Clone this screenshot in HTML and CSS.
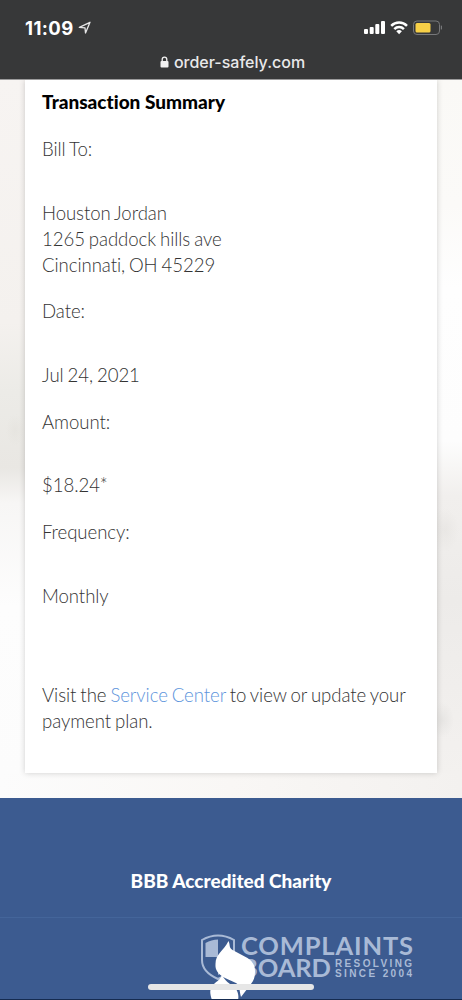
FILE: index.html
```
<!DOCTYPE html>
<html lang="en">
<head>
<meta charset="utf-8">
<title>Transaction Summary</title>
<link rel="stylesheet" href="styles.css">
</head>
<body>
<header class="browser-bar">
  <div class="status">
    <div class="clock"><span>11:09</span>
      <svg width="14" height="14" viewBox="0 0 14 14"><path d="M1.3 6.4 12 1.3 7.5 12 7 6.8Z" fill="none" stroke="#e6e6e7" stroke-width="1.3" stroke-linejoin="round"/></svg>
    </div>
    <svg class="indicators" width="80" height="16" viewBox="0 0 80 16">
      <g fill="#fff"><rect x="2" y="9" width="4" height="5" rx="1"/><rect x="7.700" y="7" width="4" height="7" rx="1"/><rect x="13.300" y="4" width="4" height="10" rx="1"/><rect x="19" y="1" width="4" height="13" rx="1"/></g>
      <g fill="none" stroke="#fff" stroke-width="2.500"><path d="M29.200 5.800a11.200 11.200 0 0 1 15.800 0"/><path d="M32.300 9.100a6.800 6.800 0 0 1 9.600 0"/></g>
      <path d="M34.300 11.300a4 4 0 0 1 5.600 0L37.100 14.200Z" fill="#fff"/>
      <rect x="51.500" y="1" width="26" height="13.500" rx="3.500" fill="none" stroke="#77787a"/>
      <rect x="53.500" y="3" width="15" height="9.500" rx="1.500" fill="#f7d047"/>
      <path d="M78.800 5.500v4a2 2 0 0 0 0-4" fill="#77787a"/>
    </svg>
  </div>
  <div class="address">
    <svg width="9" height="12" viewBox="0 0 9 12"><rect x=".5" y="5" width="8" height="6.500" rx="1" fill="#f2f2f2"/><path d="M2.200 5.500V3.500a2.300 2.300 0 0 1 4.600 0v2" fill="none" stroke="#f2f2f2" stroke-width="1.300"/></svg>
    <span>order-safely.com</span>
  </div>
</header>
<main class="page">
  <section class="card">
    <h1>Transaction Summary</h1>
    <dl>
      <dt>Bill To:</dt><dd>Houston Jordan<br>1265 paddock hills ave<br>Cincinnati, OH 45229</dd>
      <dt>Date:</dt><dd>Jul 24, 2021</dd>
      <dt>Amount:</dt><dd>$18.24*</dd>
      <dt>Frequency:</dt><dd>Monthly</dd>
    </dl>
    <p>Visit the <a>Service Center</a> to view or update your payment plan.</p>
  </section>
</main>
<footer class="footer">
  <h2>BBB Accredited Charity</h2>
  <div class="badge">
    <svg width="462" height="82" viewBox="0 0 462 82">
      <g fill="#a9bad6">
        <path d="M202 22q16-9 32 0v20q0 12-16 19-16-7-16-19Z" fill="none" stroke="#a9bad6" stroke-width="2"/>
        <path d="M205.500 25q6-3.500 12.500-3.500V39H205.500ZM218 39h12.500v3q0 10-12.500 15Z"/>
        <text class="mark" x="241" y="36.500" textLength="172">COMPLAINTS</text>
        <text class="mark" x="241" y="58.500" textLength="90">BOARD</text>
        <text class="tag" x="335" y="48.500" textLength="77">RESOLVING</text>
        <text class="tag" x="335" y="59" textLength="77">SINCE 2004</text>
      </g>
      <path d="M228.500 23c2 4 0 6 4 9l15 8c6 4 7.500 8 7.500 13 0 6-1 9-4 13-4 5-6 8-10 13-2-7-1-12-5-14l-11-5c-7-4-10-8-9.500-14 0-10 8-13 13-23Z" fill="#fff"/>
      <path d="M222 57c-2 5-5 6-8 9-4 3-5 8-2 16h26c1-4 0-8-2-11-3-4-10-6-14-14Z" fill="#fff"/>
    </svg>
    <span class="home-indicator"></span>
  </div>
</footer>
</body>
</html>
```
FILE: styles.css
```
* { box-sizing: border-box; }
body { margin: 0; height: 1000px; overflow: hidden; display: flex; flex-direction: column; font-family: Lato, sans-serif; font-variant-ligatures: none; background: #fff; }
svg { display: block; }
.browser-bar { height: 80px; background: #373839; border-bottom: 1px solid #9b9b9c; font-family: Inter, sans-serif; color: #fff; padding: 17px 20px 0 25px; }
.status { display: flex; justify-content: space-between; height: 22px; }
.clock { display: flex; align-items: center; gap: 4px; font-size: 18.500px; font-weight: 700; line-height: 22px; letter-spacing: .4px; }
.indicators { margin-top: 3px; }
.address { display: flex; align-items: center; justify-content: center; gap: 5px; margin: 12px 0 0 -2px; height: 22px; font-size: 16px; font-weight: 500; color: #e9e9ea; }
.page {
  height: 718px; padding: 0 25px;
  background:
    radial-gradient(ellipse 9px 16px at 15px 350px, #dedcd655, #dedcd600),
    radial-gradient(ellipse 12px 18px at 442px 640px, #dddcda88, #dddcda00),
    radial-gradient(ellipse 14px 22px at 445px 450px, #e3e1de88, #e3e1de00),
    linear-gradient(#f7f4f2, #f4f1ee 35%, #ecebe7 45%, #e9e7e3 56%, #f7f6f5 61%, #fdfdfd 76%, #fcfcfc) left top / 25px 693px no-repeat,
    linear-gradient(#faf9f6, #fbfaf8 18%, #fefefe 30%, #fdfdfd 52%, #f1efed 60%, #edebe9 75%, #f3f1ef) right top / 25px 693px no-repeat,
    linear-gradient(90deg, #fcfcfc, #f9f7f5 50%, #f3f1ef);
}
.card { height: 693px; padding: 9px 17px 0; background: #fff; box-shadow: 0 0 6px rgba(0, 0, 0, .18); clip-path: inset(0 -8px -8px); color: #333; font-size: 18.600px; line-height: 26px; font-weight: 300; letter-spacing: -.07px; word-spacing: -1px; }
h1 { margin: 0 0 21px; font-size: 19px; line-height: 26px; font-weight: 900; color: #000; word-spacing: 0; letter-spacing: 0; }
dl { margin: 0; }
dt { margin-bottom: 37.600px; }
dd { margin: 0 0 20.800px; }
p { margin: 73px 0 0; }
a { color: #5d94dc; }
.footer { height: 202px; background: #3c5b90; border-bottom: 1px solid #152b50; }
h2 { margin: 0; height: 120px; padding-top: 70px; border-bottom: 1px solid #44659a; text-align: center; color: #fff; font-size: 19px; line-height: 26px; font-weight: 900; }
.badge { position: relative; height: 81px; overflow: hidden; }
.mark { font-family: Lato, sans-serif; font-size: 25.500px; font-weight: 700; }
.tag { font-family: "Liberation Sans", sans-serif; font-size: 10px; font-weight: 700; }
.home-indicator { position: absolute; left: 148px; top: 66px; width: 166px; height: 6px; border-radius: 3px; background: #e6e6e6; }
```
